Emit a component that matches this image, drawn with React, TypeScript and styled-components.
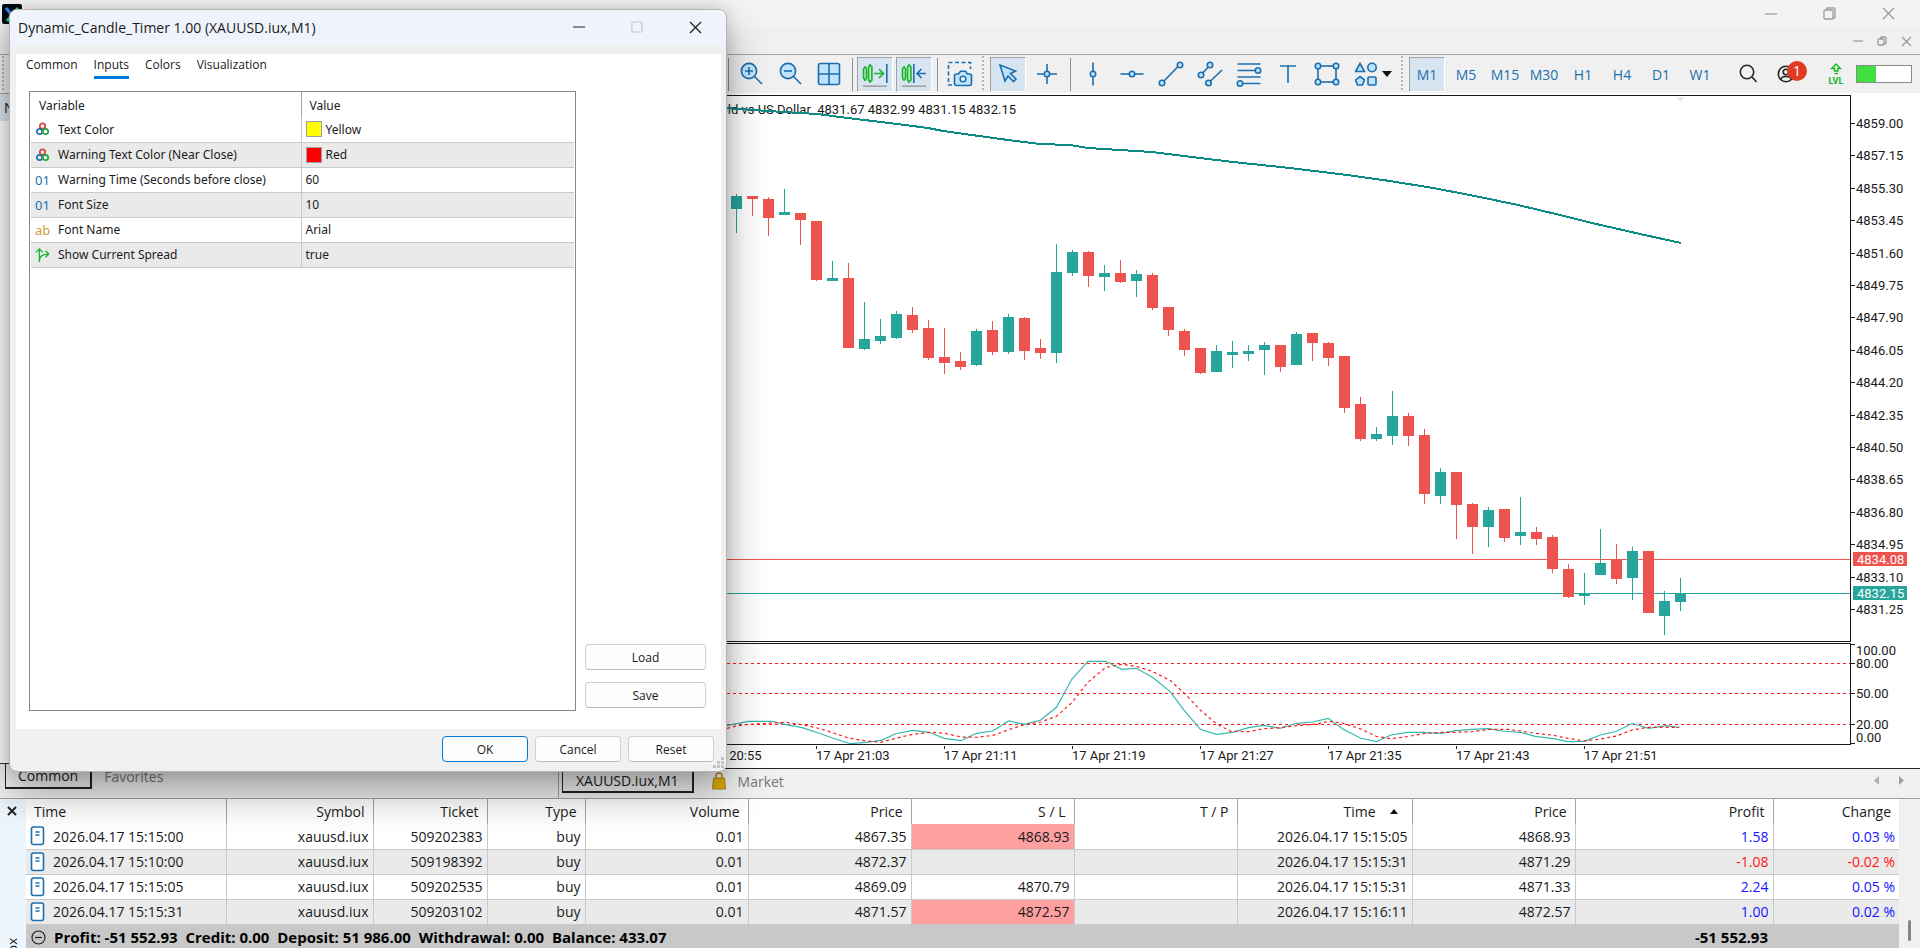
import React from "react";
import styled, { createGlobalStyle, css } from "styled-components";

const UP = "#26a69a";
const DOWN = "#ef5350";
const INK = "#1b6fae";
const FILL = "#bfe3fb";
const GREEN = "#18b22c";

const GlobalStyle = createGlobalStyle`
  * { box-sizing: border-box; }
  body { margin: 0; background: #f0f0f0; }
  body, button { font-family: "Open Sans", "Noto Sans", sans-serif; color: #1a1a1a; }
  button { margin: 0; padding: 0; border: 0; background: none; cursor: default; }
  table { border-collapse: collapse; border-spacing: 0; }
  svg { display: block; }
`;

/* ---------- window shell ---------- */

const App_ = styled.div`
  position: relative;
  display: flex;
  flex-direction: column;
  height: 100vh;
  overflow: hidden;
`;

const TitleBar = styled.header`
  display: flex;
  align-items: flex-start;
  justify-content: space-between;
  height: 28px;
  padding: 4px 25px 0 2px;
  background: #f3f3f3;
`;

const MenuBar = styled.div`
  display: flex;
  justify-content: flex-end;
  align-items: center;
  height: 27px;
  padding-right: 8px;
  border-bottom: 1px solid #a5a5a5;
`;

const WindowButtons = styled.div<{ $gap: number }>`
  display: flex;
  gap: ${(p) => p.$gap}px;
`;

const TopButtons = styled(WindowButtons)`
  padding-top: 3px;
`;

const Glyph = styled.button`
  display: flex;
  align-items: center;
  justify-content: center;
`;

/* ---------- toolbar ---------- */

const Toolbar = styled.nav`
  display: flex;
  align-items: center;
  gap: 3px;
  height: 38px;
  padding: 0 8px 0 1px;
  background: #f0f0f0;
`;

const Lead = styled.div`
  flex: 0 0 713px;
`;

const Tool = styled.button<{ $on?: boolean; $wide?: boolean }>`
  display: flex;
  align-items: center;
  justify-content: ${(p) => (p.$wide ? "flex-start" : "center")};
  gap: 5px;
  flex: none;
  width: ${(p) => (p.$wide ? 49 : 36)}px;
  height: 35px;
  padding-left: ${(p) => (p.$wide ? 6 : 0)}px;
  color: ${INK};
  font-size: 14px;
  border: 1px solid transparent;
  ${(p) =>
    p.$on &&
    css`
      background: #d7e4f2;
      border-color: #a2a2a2 #fff #fff #a2a2a2;
    `}
`;

const Separator = styled.span`
  flex: none;
  width: 4px;
  height: 33px;
  background: linear-gradient(#8e8e8e, #8e8e8e) 2px 0 / 1px 100% no-repeat;
`;

const Grip = styled.span`
  flex: none;
  width: 6px;
  height: 36px;
  background: repeating-linear-gradient(#b4b4b4 0 2px, transparent 2px 4px) 1px 0 / 2px 100% no-repeat;
`;

const RightTools = styled.div`
  display: flex;
  align-items: center;
  gap: 2px;
  margin-left: auto;
`;

const Account = styled(Tool)`
  position: relative;
  margin-right: 12px;
`;

const Badge = styled.span`
  position: absolute;
  left: 18px;
  top: 3px;
  width: 20px;
  height: 20px;
  border-radius: 50%;
  background: #e23a20;
  color: #fff;
  font-size: 14px;
  line-height: 20px;
  text-align: center;
`;

const Level = styled.span`
  display: flex;
  width: 56px;
  height: 18px;
  border: 1px solid #8a8a8a;
  background: linear-gradient(#41e041, #41e041) 0 0 / 19px 100% no-repeat #fff;
`;

/* ---------- workspace ---------- */

const Workspace = styled.main`
  display: flex;
  background: #fff;
`;

const Navigator = styled.aside`
  display: flex;
  flex-direction: column;
  flex: 0 0 559px;
  border-right: 1px solid #a0a0a0;
  background: #f0f0f0;
`;

const NavHeader = styled.div`
  height: 28px;
  padding: 0 4px;
  background: #dce8f4;
  border-top: 1px solid #a0a0a0;
  font-size: 14px;
  line-height: 28px;
`;

const NavBody = styled.div`
  flex: 1;
  background: #fff;
  border-bottom: 1px solid #333;
`;

const NavTabs = styled.div`
  display: flex;
  height: 34px;
  padding-left: 5px;
`;

const DocTab = styled.button<{ $on?: boolean }>`
  display: flex;
  align-items: center;
  gap: 12px;
  height: 24px;
  padding: 0 13px;
  font-size: 14px;
  color: ${(p) => (p.$on ? "#1a1a1a" : "#777")};
  ${(p) =>
    p.$on &&
    css`
      border: solid #222;
      border-width: 0 2px 2px 1px;
    `}
`;

const NavTab = styled(DocTab)`
  height: 25px;
  padding: 0 12px;
`;

const ChartArea = styled.section`
  flex: 1;
  min-width: 0;
  padding-top: 2px;
`;

const ChartGrid = styled.div`
  display: grid;
  grid-template-columns: minmax(0, 1fr) 69px;
  border-bottom: 1px solid #222;
`;

const Pane = styled.div`
  border: solid #1a1a1a;
  border-width: 1px 1px 1px 0;
  margin-bottom: 1px;
`;

const ChartTabs = styled.div`
  display: flex;
  align-items: flex-start;
  gap: 5px;
  height: 29px;
  padding: 0 16px 0 3px;
  background: #f0f0f0;
`;

const Scrollers = styled.div`
  display: flex;
  gap: 20px;
  margin-left: auto;
  padding-top: 7px;
`;

const chartText = css`
  font-family: Roboto, "Liberation Sans", sans-serif;
  font-size: 13px;
`;

const PlotSvg = styled.svg`
  width: 100%;
  ${chartText}
`;

/* ---------- toolbox ---------- */

const Toolbox = styled.section`
  display: flex;
  flex: 1;
  min-height: 0;
  overflow: hidden;
  border-top: 1px solid #a0a0a0;
  background: #f0f0f0;
`;

const Strip = styled.div`
  display: flex;
  flex-direction: column;
  align-items: center;
  flex: 0 0 26px;
  padding: 7px 2px 0 0;
  background: #eef6fd;
  gap: 122px;
`;

const StripLabel = styled.span`
  writing-mode: vertical-rl;
  transform: rotate(180deg);
  font-size: 13px;
  line-height: 18px;
`;

const Trades = styled.div`
  flex: 1;
  min-width: 0;
  display: flex;
  flex-direction: column;
`;

const TradeTable = styled.table`
  width: 100%;
  table-layout: fixed;
  background: #fff;
  font-size: 14px;
`;

const Th = styled.th<{ $left?: boolean }>`
  height: 25px;
  padding: 0 8px;
  font-weight: 400;
  text-align: ${(p) => (p.$left ? "left" : "right")};
  border-right: 1px solid #a5a5a5;
  &:last-child { border-right: 0; }
`;

const SortMark = styled.span`
  display: inline-block;
  margin: 0 6px 3px 14px;
  border: solid transparent;
  border-width: 0 4px 5px;
  border-bottom-color: #111;
`;

const Tr = styled.tr`
  &:nth-child(even) { background: #eaeaea; }
`;

const Td = styled.td<{ $tone?: "gain" | "loss" | "hit" | "" }>`
  height: 25px;
  padding: 0 4px;
  text-align: right;
  white-space: nowrap;
  border-right: 1px solid #c9c9c9;
  border-bottom: 1px solid #c9c9c9;
  color: ${(p) => (p.$tone === "gain" ? "#1414ff" : p.$tone === "loss" ? "#ff1414" : "#1a1a1a")};
  ${(p) => p.$tone === "hit" && css`background: #ffa0a0;`}
  &:first-child { text-align: left; }
  &:last-child { border-right: 0; }
`;

const WithIcon = styled.span`
  display: flex;
  align-items: center;
  gap: 8px;
`;

const Summary = styled.div`
  display: flex;
  flex: 1;
  align-items: flex-start;
  padding: 0 131px 0 5px;
  gap: 8px;
  background: #c8c8c8;
  font-size: 15px;
  font-weight: 700;
  line-height: 25px;
  color: #000;
  white-space: pre;
  svg { margin-top: 5px; }
`;

const SummaryTotal = styled.span`
  margin-left: auto;
`;

const Scrollbar = styled.div`
  display: flex;
  justify-content: center;
  flex: 0 0 21px;
  padding-top: 121px;
`;

const Thumb = styled.span`
  width: 3px;
  height: 21px;
  border-radius: 2px;
  background: #858585;
`;

/* ---------- dialog ---------- */

const Dialog = styled.div`
  position: absolute;
  left: 9px;
  top: 9px;
  display: flex;
  flex-direction: column;
  width: 718px;
  height: 763px;
  overflow: hidden;
  border: 1px solid #b4b4b4;
  border-radius: 8px;
  background: #f0f0f0;
  box-shadow: 0 20px 42px rgba(0, 0, 0, 0.34), 0 0 16px rgba(0, 0, 0, 0.14);
  font-size: 12px;
`;

const DialogTitle = styled.div`
  display: flex;
  align-items: center;
  justify-content: space-between;
  height: 36px;
  padding: 0 24px 2px 8px;
  background: #eff3fb;
  font-size: 14px;
`;

const DialogPanel = styled.div`
  display: flex;
  flex-direction: column;
  flex: 1;
  margin: 8px 5px 0 6px;
  padding: 0 15px 18px 13px;
  background: #fff;
`;

const Tabs = styled.div`
  display: flex;
  gap: 16px;
  margin-left: -3px;
`;

const Tab = styled.button<{ $on?: boolean }>`
  height: 25px;
  font-size: 12px;
  line-height: 22px;
  border-bottom: 3px solid ${(p) => (p.$on ? "#0078d7" : "transparent")};
`;

const DialogBody = styled.div`
  display: flex;
  flex: 1;
  gap: 9px;
  margin-top: 12px;
`;

const ListBox = styled.div`
  flex: 1;
  padding: 0 1px;
  border: 1px solid #828790;
`;

const InputTable = styled.table`
  width: 100%;
  table-layout: fixed;
  font-family: "Noto Sans", "Open Sans", sans-serif;
  font-size: 12px;
`;

const InputTh = styled.th`
  height: 25px;
  padding: 2px 8px 0;
  font-weight: 400;
  text-align: left;
  &:first-child { border-right: 1px solid #a5a5a5; }
`;

const InputTd = styled.td`
  height: 25px;
  padding: 0 4px;
  white-space: nowrap;
  border-bottom: 1px solid #c9c9c9;
  &:first-child { border-right: 1px solid #c9c9c9; }
`;

const Swatch = styled.span<{ $color: string }>`
  width: 16px;
  height: 16px;
  border: 1px solid #a0a0a0;
  background: ${(p) => p.$color};
`;

const SwatchRow = styled.span`
  display: flex;
  align-items: center;
  gap: 4px;
`;

const SideButtons = styled.div`
  display: flex;
  flex-direction: column;
  justify-content: flex-end;
  gap: 12px;
  width: 121px;
  padding-bottom: 3px;
`;

const PushButton = styled.button<{ $primary?: boolean; $fixed?: boolean }>`
  width: ${(p) => (p.$fixed ? "86px" : "auto")};
  height: 26px;
  border: 1px solid ${(p) => (p.$primary ? "#0078d4" : "#d0d0d0")};
  border-bottom-color: ${(p) => (p.$primary ? "#0078d4" : "#bcbcbc")};
  border-radius: 4px;
  background: #fdfdfd;
  font-size: 12px;
`;

const DialogFooter = styled.div`
  position: relative;
  display: flex;
  justify-content: flex-end;
  gap: 7px;
  height: 42px;
  padding: 7px 12px 0 0;
`;

const ResizeGrip = styled.svg`
  position: absolute;
  right: 2px;
  bottom: 2px;
`;

/* ---------- icons ---------- */

const Ico: React.FC<{ children: React.ReactNode; w?: number; h?: number; c?: string }> = ({
  children, w = 26, h = 26, c = INK,
}) => (
  <svg width={w} height={h} viewBox={`0 0 ${w} ${h}`} fill="none" stroke={c} strokeWidth={1.6} aria-hidden="true">
    {children}
  </svg>
);

const Zoom = ({ plus }: { plus?: boolean }) => (
  <Ico>
    <circle cx="11" cy="10" r="7.6" fill={FILL} />
    <path d={plus ? "M7 10h8M11 6v8" : "M7 10h8"} />
    <path d="M16.5 15.5l7.5 7.5" />
  </Ico>
);

const GridIcon = () => (
  <Ico>
    <rect x="2.5" y="2.5" width="21" height="21" rx="2" fill={FILL} />
    <path d="M13 2.5v21M2.5 13h21" />
  </Ico>
);

const candlesMini = (
  <g stroke={GREEN} fill="#b6f0bd">
    <rect x="1.5" y="7" width="3" height="11" rx="1" />
    <path d="M3 5v2M3 18v2M8 3v2M8 20v2" />
    <rect x="6.5" y="5" width="3.4" height="15" rx="1" />
  </g>
);

const AutoScroll = () => (
  <Ico>
    {candlesMini}
    <path d="M12 12.500h9M17 8l4.500 4.500L17 17" stroke={GREEN} />
    <path d="M24.800 3v19" />
    <path d="M1 25.200h24" stroke="#a0a0a0" />
  </Ico>
);

const ChartShift = () => (
  <Ico>
    {candlesMini}
    <path d="M25 12.500h-8M20.500 8L16 12.500l4.500 4.500M12.800 3v19" />
    <path d="M1 25.200h24" stroke="#a0a0a0" />
  </Ico>
);

const Camera = () => (
  <Ico>
    <path d="M5 24H1.500V1.500h22V8" strokeDasharray="4 2.500" />
    <path d="M7.500 15q0-2 2-2h2l2-2.700h5l2 2.700h2q2 0 2 2v7.500q0 2-2 2h-13q-2 0-2-2z" fill={FILL} />
    <circle cx="16" cy="18" r="2.800" fill="#fff" />
  </Ico>
);

const Cursor = () => (
  <Ico>
    <path d="M5 4l5 16 3-5 5.500 5.500 2.500-2.500-5.500-5.500 5-2.500z" fill={FILL} />
  </Ico>
);

const Dot = ({ x, y }: { x: number; y: number }) => <circle cx={x} cy={y} r="2.700" fill={FILL} />;

const Cross = () => (
  <Ico><path d="M3 13h20M13 3v20" /><Dot x={13} y={13} /></Ico>
);
const VLine = () => (
  <Ico><path d="M13 1.500v23" /><Dot x={13} y={13} /></Ico>
);
const HLine = () => (
  <Ico><path d="M1.500 13h23" /><Dot x={13} y={13} /></Ico>
);
const Trend = () => (
  <Ico><path d="M5 21L21 4.500" /><Dot x={4} y={22} /><Dot x={22} y={4} /></Ico>
);
const Channel = () => (
  <Ico>
    <path d="M4 14L13 4M12 21.500L25 9" />
    <Dot x={4} y={14} /><Dot x={13} y={4} /><Dot x={11.5} y={22} />
  </Ico>
);
const Fibo = () => (
  <Ico>
    <path d="M1.500 3h23M1.500 9.500h23M1.500 16h23M1.500 22.500h23" />
    <Dot x={22} y={9.5} /><Dot x={4} y={22.5} />
  </Ico>
);
const TextIcon = () => (
  <Ico><path d="M5 5h16M13 5v17" /></Ico>
);
const RectIcon = () => (
  <Ico>
    <rect x="4" y="5" width="18" height="16" />
    <Dot x={4} y={5} /><Dot x={22} y={5} /><Dot x={4} y={21} /><Dot x={22} y={21} />
  </Ico>
);
const Shapes = () => (
  <Ico w={22}>
    <path d="M5 2.500l4.500 8h-9z" fill={FILL} />
    <circle cx="17" cy="6.500" r="4.200" fill={FILL} />
    <path d="M5 15.500l4.500 3.500-2 5h-5l-2-5z" fill={FILL} />
    <rect x="13" y="16" width="8" height="8" rx="1" fill={FILL} />
  </Ico>
);

const Minimize = ({ s, c = "#9a9a9a" }: { s: number; c?: string }) => (
  <Ico w={s} h={s} c={c}><path d={`M0 ${s / 2}h${s}`} strokeWidth={1.2} /></Ico>
);
const Restore = ({ s }: { s: number }) => (
  <Ico w={s} h={s} c="#9a9a9a">
    <g strokeWidth={1.3}>
      <rect x="1" y="3" width={s - 4} height={s - 4} rx="1" />
      <path d={`M3.500 3V2q0-1 1-1H${s - 2}q1 0 1 1v${s - 5}q0 1-1 1h-1`} />
    </g>
  </Ico>
);
const Close = ({ s, c = "#9a9a9a", w = 1.3 }: { s: number; c?: string; w?: number }) => (
  <Ico w={s} h={s} c={c}><path d={`M1 1L${s - 1} ${s - 1}M${s - 1} 1L1 ${s - 1}`} strokeWidth={w} /></Ico>
);

const AppLogo = () => (
  <svg width="20" height="20" viewBox="0 0 20 20" aria-hidden="true">
    <rect width="20" height="20" rx="2" fill="#050a10" />
    <path d="M4 4l5 6" stroke="#2f8df5" strokeWidth="3" />
    <path d="M16 4l-6 7-5 6" stroke="#19c98b" strokeWidth="3" />
  </svg>
);

const Bag = () => (
  <svg width="14" height="18" viewBox="0 0 14 18" aria-hidden="true">
    <path d="M4 7V4a3 3 0 0 1 6 0v3" fill="none" stroke="#b5821a" strokeWidth="1.500" />
    <path d="M1.500 6h11L13.500 17H.5z" fill="#e0b000" stroke="#b5821a" />
  </svg>
);

const DocIcon = () => (
  <svg width="15" height="20" viewBox="0 0 15 20" fill="none" stroke={INK} aria-hidden="true">
    <rect x="1.500" y="1" width="12" height="17.500" rx="2" strokeWidth="1.600" fill="#fff" />
    <path d="M5.500 6h4M5.500 9h4" strokeWidth="1.400" />
  </svg>
);

const ColorIcon = () => (
  <svg width="15" height="16" viewBox="0 0 15 16" fill="none" strokeWidth="1.700" aria-hidden="true">
    <circle cx="7.500" cy="5" r="2.700" stroke="#d9453a" />
    <circle cx="4.500" cy="10.500" r="2.700" stroke={INK} />
    <circle cx="10.500" cy="10.500" r="2.700" stroke="#22a838" />
  </svg>
);

const BoolIcon = () => (
  <svg width="17" height="18" viewBox="0 0 17 18" fill="none" stroke={GREEN} strokeWidth="1.500" aria-hidden="true">
    <path d="M5 17V2M1 6l4-4 4 4M5 16q0-8 10-8M12 4.500L15.500 8 12 11.500" />
  </svg>
);

const TypeIcon = styled.span<{ $c: string }>`
  display: flex;
  width: 15px;
  font-size: 13px;
  line-height: 18px;
  color: ${(p) => p.$c};
`;

/* ---------- chart data ---------- */

// high, body top, body bottom, low, direction
type Bar = [number, number, number, number, 0 | 1];
const bars: Bar[] = [
  [194, 196, 209, 233, 1], [196, 196, 199, 216, 0], [197, 199, 218, 236, 0], [189, 212, 215, 215, 1],
  [213, 213, 220, 245, 0], [221, 221, 280, 281, 0], [261, 278, 281, 281, 1], [263, 278, 348, 348, 0],
  [302, 339, 349, 350, 1], [319, 336, 341, 344, 1], [311, 314, 338, 339, 1], [307, 315, 330, 333, 0],
  [320, 328, 358, 360, 0], [328, 357, 363, 374, 0], [352, 361, 367, 370, 0], [329, 331, 365, 366, 1],
  [321, 330, 352, 355, 0], [314, 317, 352, 354, 1], [317, 318, 351, 360, 0], [339, 348, 353, 359, 0],
  [244, 272, 353, 363, 1], [250, 252, 273, 276, 1], [251, 252, 276, 287, 0], [265, 273, 277, 291, 1],
  [260, 273, 282, 283, 0], [270, 274, 281, 297, 1], [273, 275, 308, 310, 0], [307, 307, 330, 336, 0],
  [329, 331, 350, 356, 0], [348, 348, 373, 374, 0], [345, 351, 372, 372, 1], [341, 352, 355, 368, 1],
  [345, 351, 354, 361, 1], [342, 345, 350, 375, 1], [345, 345, 367, 372, 0], [332, 334, 365, 365, 1],
  [333, 333, 343, 361, 0], [342, 343, 358, 366, 0], [356, 356, 408, 413, 0], [397, 404, 439, 441, 0],
  [427, 434, 439, 441, 1], [391, 416, 436, 445, 1], [413, 416, 436, 446, 0], [429, 435, 494, 504, 0],
  [468, 472, 496, 504, 1], [472, 472, 505, 539, 0], [503, 504, 527, 554, 0], [507, 510, 527, 547, 1],
  [509, 509, 538, 542, 0], [497, 532, 536, 545, 1], [527, 532, 539, 545, 0], [535, 537, 569, 573, 0],
  [564, 569, 597, 598, 0], [573, 593, 596, 605, 1], [529, 563, 575, 575, 1], [544, 559, 579, 584, 0],
  [547, 551, 578, 600, 1], [551, 551, 613, 613, 0], [591, 601, 616, 635, 1], [578, 593, 602, 611, 1],
];

const PLOT_X = 559;
const PLOT_Y = 96;
const OSC_Y = 644;
const BAR_STEP = 16;
const FIRST_BAR = 736 - PLOT_X;

const toPoints = (pts: number[][], dy: number) =>
  pts.map(([x, y]) => `${Math.round((x - PLOT_X) * 10) / 10},${Math.round((y - dy) * 10) / 10}`).join(" ");

const average = [
  [700, 106], [726, 108], [768, 111], [800, 113], [817, 114], [848, 118], [897, 124], [928, 128], [943, 131],
  [1008, 140], [1040, 144], [1070, 145], [1088, 148], [1120, 150], [1152, 152], [1200, 158], [1233, 162],
  [1290, 168], [1347, 175], [1390, 181], [1433, 188], [1475, 196], [1518, 205], [1560, 215], [1592, 223],
  [1640, 234], [1681, 243],
];

const scale = (pts: number[][], x0: number, k: number, y0: number) => pts.map(([x, y]) => [x0 + x / k, y0 + y / 3]);

const kLine = [
  ...scale([
    [18, 287], [80, 274], [145, 274], [185, 284], [230, 293], [270, 307], [315, 324], [365, 341], [410, 337],
    [452, 331], [492, 311], [540, 301], [585, 307], [628, 325], [675, 332], [718, 310], [763, 303], [808, 273],
    [852, 283], [898, 270], [942, 232], [985, 148], [1030, 94], [1080, 94], [1125, 118], [1165, 115],
    [1210, 141], [1260, 184], [1300, 242], [1345, 298], [1390, 313], [1435, 307], [1480, 293], [1523, 286],
  ], 720, 2.8, 630),
  ...scale([
    [0, 505], [40, 490], [80, 486], [118, 475], [155, 508], [197, 534], [236, 545], [272, 525], [312, 517],
    [350, 517], [395, 520], [430, 512], [470, 508], [510, 506], [545, 513], [590, 517], [625, 529], [670, 536],
    [705, 545], [745, 544], [785, 525], [825, 514], [863, 490], [903, 505], [945, 497], [978, 503],
  ], 1280, 2.45, 560),
];

const dLine = [
  ...scale([
    [20, 295], [50, 287], [75, 284], [110, 281], [185, 277], [240, 286], [280, 296], [320, 310], [360, 324],
    [410, 333], [450, 337], [495, 324], [540, 313], [590, 307], [630, 310], [675, 321], [720, 322], [765, 316],
    [808, 299], [852, 284], [898, 276], [942, 259], [985, 218], [1030, 157], [1080, 112], [1125, 103],
    [1165, 109], [1210, 124], [1260, 151], [1305, 195], [1345, 241], [1390, 281], [1430, 304], [1480, 305],
    [1523, 296],
  ], 720, 2.8, 630),
  ...scale([
    [0, 503], [40, 497], [90, 492], [120, 484], [155, 490], [200, 508], [236, 529], [272, 536], [312, 530],
    [350, 521], [395, 517], [430, 517], [470, 515], [515, 508], [560, 508], [590, 513], [625, 520], [670, 526],
    [705, 535], [745, 543], [785, 537], [825, 528], [863, 510], [903, 502], [978, 502],
  ], 1280, 2.45, 560),
];

const times = ["20:55", "21:03", "21:11", "21:19", "21:27", "21:35", "21:43", "21:51"];

const PricePlot = () => (
  <PlotSvg height={545} shapeRendering="crispEdges" role="img" aria-label="XAUUSD one minute candles">
    <text x={1016 - PLOT_X} y={18} textAnchor="end" fill="#1a1a1a" style={{ whiteSpace: "pre" }}>
      {"XAUUSD.iux, M1:  Gold vs US Dollar  4831.67 4832.99 4831.15 4832.15"}
    </text>
    <path d="M1116 1h11l-5.500 5z" fill="#f0e6f4" />
    <rect x={0} y={559 - PLOT_Y} width="100%" height={1} fill={DOWN} />
    <rect x={0} y={593 - PLOT_Y} width="100%" height={1} fill={UP} />
    {bars.map(([hi, top, bottom, lo, up], i) => {
      const x = FIRST_BAR + i * BAR_STEP;
      const fill = up ? UP : DOWN;
      return (
        <g key={i} fill={fill}>
          <rect x={x} y={hi - PLOT_Y} width={1} height={lo - hi} />
          <rect x={x - 5} y={top - PLOT_Y} width={11} height={Math.max(1, bottom - top)} />
        </g>
      );
    })}
    <polyline points={toPoints(average, PLOT_Y)} fill="none" stroke="#0c8a84" strokeWidth={2} />
  </PlotSvg>
);

const OscPlot = () => (
  <PlotSvg height={100} role="img" aria-label="Stochastic oscillator">
    {[663, 693, 724].map((y) => (
      <line key={y} x1={0} x2="100%" y1={y - OSC_Y + 0.5} y2={y - OSC_Y + 0.5} stroke="#ff1a1a" strokeDasharray="3 3" />
    ))}
    <polyline points={toPoints(kLine, OSC_Y)} fill="none" stroke="#35b8b0" strokeWidth={1.2} />
    <polyline points={toPoints(dLine, OSC_Y)} fill="none" stroke="#ff1a1a" strokeWidth={1.2} strokeDasharray="3 3" />
  </PlotSvg>
);

const TimeAxis = () => (
  <PlotSvg height={22}>
    {times.map((t, i) => {
      const x = 688 - PLOT_X + i * 128;
      return (
        <g key={t} fill="#1a1a1a">
          <rect x={x} y={0} width={1} height={3} />
          <text x={x} y={14}>{`17 Apr ${t}`}</text>
        </g>
      );
    })}
  </PlotSvg>
);

const AXIS_Y = 95;
const PriceAxis = () => (
  <PlotSvg height={673} fill="#1a1a1a">
    {Array.from({ length: 16 }, (_, i) => {
      const y = Math.round(123 + i * 32.4) - AXIS_Y;
      return (
        <g key={i}>
          <rect x={0} y={y} width={4} height={1} />
          <text x={5} y={y + 5}>{(4859 - i * 1.85).toFixed(2)}</text>
        </g>
      );
    })}
    {[[559, "4834.08", DOWN], [593, "4832.15", UP]].map(([y, label, fill]) => (
      <g key={label}>
        <rect x={2} y={Number(y) - 7 - AXIS_Y} width={54} height={14} fill={String(fill)} />
        <text x={6} y={Number(y) + 5 - AXIS_Y} fill="#fff">{label}</text>
      </g>
    ))}
    {[[644, 650, "100.00"], [663, 663, "80.00"], [693, 693, "50.00"], [724, 724, "20.00"], [743, 737, "0.00"]].map(
      ([tick, y, label]) => (
        <g key={label}>
          <rect x={0} y={Number(tick) - AXIS_Y} width={4} height={1} />
          <text x={5} y={Number(y) + 5 - AXIS_Y}>{label}</text>
        </g>
      )
    )}
  </PlotSvg>
);

/* ---------- table data ---------- */

const columns: [string, number | undefined][] = [
  ["Time", 200], ["Symbol", 147], ["Ticket", 114], ["Type", 98], ["Volume", 163], ["Price", 163], ["S / L", 163],
  ["T / P", 163], ["Time", 175], ["Price", 163], ["Profit", undefined], ["Change", 126],
];

const trades = [
  ["2026.04.17 15:15:00", "509202383", "4867.35", "4868.93", "2026.04.17 15:15:05", "4868.93", "1.58", "0.03 %", "hit"],
  ["2026.04.17 15:10:00", "509198392", "4872.37", "", "2026.04.17 15:15:31", "4871.29", "-1.08", "-0.02 %", ""],
  ["2026.04.17 15:15:05", "509202535", "4869.09", "4870.79", "2026.04.17 15:15:31", "4871.33", "2.24", "0.05 %", ""],
  ["2026.04.17 15:15:31", "509203102", "4871.57", "4872.57", "2026.04.17 15:16:11", "4872.57", "1.00", "0.02 %", "hit"],
];

const inputs: [React.ReactNode, string, React.ReactNode][] = [
  [<ColorIcon />, "Text Color", <SwatchRow><Swatch $color="#ffff00" />Yellow</SwatchRow>],
  [<ColorIcon />, "Warning Text Color (Near Close)", <SwatchRow><Swatch $color="#ff0000" />Red</SwatchRow>],
  [<TypeIcon $c={INK}>01</TypeIcon>, "Warning Time (Seconds before close)", "60"],
  [<TypeIcon $c={INK}>01</TypeIcon>, "Font Size", "10"],
  [<TypeIcon $c="#cf9a35">ab</TypeIcon>, "Font Name", "Arial"],
  [<TypeIcon $c={GREEN}><BoolIcon /></TypeIcon>, "Show Current Spread", "true"],
];

const tools: [string, React.ReactNode, boolean?][] = [
  ["Zoom in", <Zoom plus />], ["Zoom out", <Zoom />], ["Tile windows", <GridIcon />], ["|", null],
  ["Auto scroll", <AutoScroll />, true], ["Chart shift", <ChartShift />, true], ["|", null],
  ["Screenshot", <Camera />], [":", null],
  ["Cursor", <Cursor />, true], ["Crosshair", <Cross />], ["|", null],
  ["Vertical line", <VLine />], ["Horizontal line", <HLine />], ["Trend line", <Trend />],
  ["Equidistant channel", <Channel />], ["Fibonacci", <Fibo />], ["Text", <TextIcon />], ["Rectangle", <RectIcon />],
];

const frames = ["M1", "M5", "M15", "M30", "H1", "H4", "D1", "W1"];

const InputsDialog = () => (
  <Dialog role="dialog" aria-label="Dynamic_Candle_Timer 1.00">
    <DialogTitle>
      Dynamic_Candle_Timer 1.00 (XAUUSD.iux,M1)
      <WindowButtons $gap={46}>
        <Glyph aria-label="Minimize"><Minimize s={12} c="#222" /></Glyph>
        <Glyph aria-label="Maximize" disabled>
          <Ico w={12} h={12} c="#c4c8ce"><rect x="1" y="1" width="10" height="10" rx="1" strokeWidth={1.2} /></Ico>
        </Glyph>
        <Glyph aria-label="Close"><Close s={13} c="#222" /></Glyph>
      </WindowButtons>
    </DialogTitle>
    <DialogPanel>
      <Tabs role="tablist">
        {["Common", "Inputs", "Colors", "Visualization"].map((t) => (
          <Tab key={t} role="tab" $on={t === "Inputs"}>{t}</Tab>
        ))}
      </Tabs>
      <DialogBody>
        <ListBox>
          <InputTable>
            <colgroup><col style={{ width: 270 }} /><col /></colgroup>
            <thead><tr><InputTh>Variable</InputTh><InputTh>Value</InputTh></tr></thead>
            <tbody>
              {inputs.map(([icon, name, value]) => (
                <Tr key={name}>
                  <InputTd><WithIcon>{icon}{name}</WithIcon></InputTd>
                  <InputTd>{value}</InputTd>
                </Tr>
              ))}
            </tbody>
          </InputTable>
        </ListBox>
        <SideButtons>
          <PushButton>Load</PushButton>
          <PushButton>Save</PushButton>
        </SideButtons>
      </DialogBody>
    </DialogPanel>
    <DialogFooter>
      <PushButton $fixed $primary>OK</PushButton>
      <PushButton $fixed>Cancel</PushButton>
      <PushButton $fixed>Reset</PushButton>
      <ResizeGrip width="12" height="12" viewBox="0 0 12 12" fill="#c2c2c2" aria-hidden="true">
        <path d="M9 0h3v3H9zM9 4h3v3H9zM9 8h3v3H9zM5 4h3v3H5zM5 8h3v3H5zM1 8h3v3H1z" />
      </ResizeGrip>
    </DialogFooter>
  </Dialog>
);

const App = () => (
  <App_>
    <GlobalStyle />
    <TitleBar>
      <AppLogo />
      <TopButtons $gap={46}>
        <Glyph aria-label="Minimize"><Minimize s={12} /></Glyph>
        <Glyph aria-label="Restore"><Restore s={13} /></Glyph>
        <Glyph aria-label="Close"><Close s={13} /></Glyph>
      </TopButtons>
    </TitleBar>
    <MenuBar>
      <WindowButtons $gap={14}>
        <Glyph aria-label="Minimize chart"><Minimize s={10} /></Glyph>
        <Glyph aria-label="Restore chart"><Restore s={10} /></Glyph>
        <Glyph aria-label="Close chart"><Close s={11} /></Glyph>
      </WindowButtons>
    </MenuBar>
    <Toolbar>
      <Grip />
      <Lead />
      <Separator />
      {tools.map(([label, icon, on], i) =>
        label === "|" ? <Separator key={i} /> : label === ":" ? <Grip key={i} /> : (
          <Tool key={i} aria-label={label} $on={on}>{icon}</Tool>
        )
      )}
      <Tool $wide aria-label="Objects">
        <Shapes />
        <svg width="10" height="6" viewBox="0 0 10 6" aria-hidden="true"><path d="M0 0h10L5 6z" fill="#111" /></svg>
      </Tool>
      <Grip />
      {frames.map((f) => <Tool key={f} $on={f === "M1"}>{f}</Tool>)}
      <RightTools>
        <Tool aria-label="Search">
          <Ico w={18} h={20} c="#2a2a2a"><circle cx="8" cy="8" r="6.7" /><path d="M13 13l4.500 5" /></Ico>
        </Tool>
        <Account aria-label="Account">
          <Ico w={18} h={18} c="#222">
            <circle cx="9" cy="9" r="7.700" /><circle cx="9" cy="7" r="2.800" />
            <path d="M4 14.500q0-3 5-3t5 3" />
          </Ico>
          <Badge>1</Badge>
        </Account>
        <Tool aria-label="Level">
          <svg width="18" height="22" viewBox="0 0 18 22" aria-hidden="true">
            <path d="M9 1L13.500 5.500H11V8H7.500V5.500H4.500z" fill="#c8f5cd" stroke={GREEN} strokeWidth="1.300" />
            <path d="M7.500 10.500H11" stroke={GREEN} strokeWidth="1.300" />
            <text x="9" y="21" textAnchor="middle" fontSize="9" fontWeight="700" fill={GREEN} fontFamily="Roboto, sans-serif">LVL</text>
          </svg>
        </Tool>
        <Level />
      </RightTools>
    </Toolbar>
    <Workspace>
      <Navigator>
        <NavHeader>Navigator</NavHeader>
        <NavBody />
        <NavTabs>
          <NavTab $on>Common</NavTab>
          <NavTab>Favorites</NavTab>
        </NavTabs>
      </Navigator>
      <ChartArea>
        <ChartGrid>
          <div>
            <Pane><PricePlot /></Pane>
            <Pane><OscPlot /></Pane>
            <TimeAxis />
          </div>
          <PriceAxis />
        </ChartGrid>
        <ChartTabs>
          <DocTab $on>XAUUSD.iux,M1</DocTab>
          <DocTab><Bag />Market</DocTab>
          <Scrollers>
            <Glyph aria-label="Scroll tabs left"><svg width="5" height="9" viewBox="0 0 5 9"><path d="M5 0v9L0 4.500z" fill="#b0b0b0" /></svg></Glyph>
            <Glyph aria-label="Scroll tabs right"><svg width="5" height="9" viewBox="0 0 5 9"><path d="M0 0v9l5-4.500z" fill="#a0a0a0" /></svg></Glyph>
          </Scrollers>
        </ChartTabs>
      </ChartArea>
    </Workspace>
    <Toolbox>
      <Strip>
        <Glyph aria-label="Close toolbox"><Close s={10} c="#222" w={2} /></Glyph>
        <StripLabel>Toolbox</StripLabel>
      </Strip>
      <Trades>
        <TradeTable>
          <colgroup>{columns.map(([, w], i) => <col key={i} style={{ width: w }} />)}</colgroup>
          <thead>
            <tr>
              {columns.map(([name], i) => (
                <Th key={i} $left={i === 0}>{name}{i === 8 && <SortMark />}</Th>
              ))}
            </tr>
          </thead>
          <tbody>
            {trades.map(([open, ticket, price, sl, close, closePrice, profit, change, hit]) => {
              const tone = profit.startsWith("-") ? "loss" : "gain";
              return (
                <Tr key={ticket}>
                  <Td><WithIcon><DocIcon />{open}</WithIcon></Td>
                  <Td>xauusd.iux</Td>
                  <Td>{ticket}</Td>
                  <Td>buy</Td>
                  <Td>0.01</Td>
                  <Td>{price}</Td>
                  <Td $tone={hit as "hit" | ""}>{sl}</Td>
                  <Td />
                  <Td>{close}</Td>
                  <Td>{closePrice}</Td>
                  <Td $tone={tone}>{profit}</Td>
                  <Td $tone={tone}>{change}</Td>
                </Tr>
              );
            })}
          </tbody>
        </TradeTable>
        <Summary>
          <Ico w={15} h={15} c="#222"><circle cx="7.500" cy="7.500" r="6.500" strokeWidth={1.2} /><path d="M4 7.500h7" strokeWidth={1.2} /></Ico>
          {"Profit: -51 552.93  Credit: 0.00  Deposit: 51 986.00  Withdrawal: 0.00  Balance: 433.07"}
          <SummaryTotal>-51 552.93</SummaryTotal>
        </Summary>
      </Trades>
      <Scrollbar><Thumb /></Scrollbar>
    </Toolbox>
    <InputsDialog />
  </App_>
);

export default App;
